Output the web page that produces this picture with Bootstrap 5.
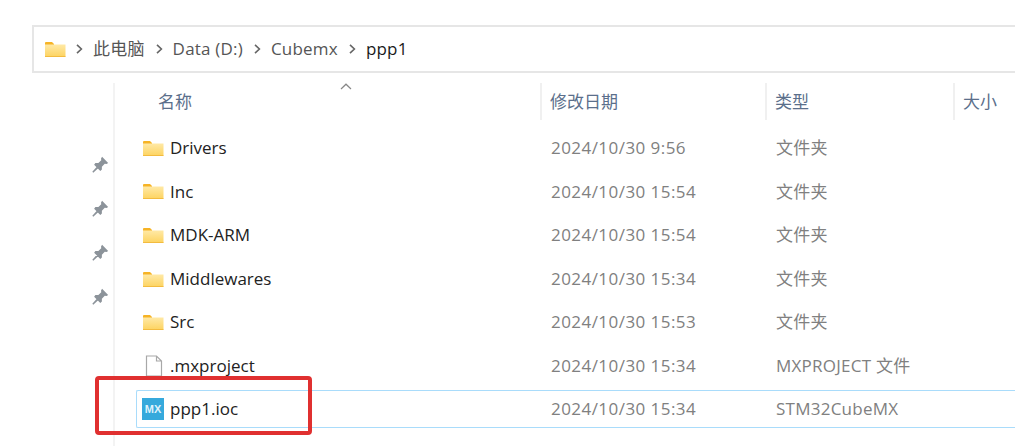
<!DOCTYPE html>
<html lang="zh"><head><meta charset="utf-8">
<link href="https://cdn.jsdelivr.net/npm/bootstrap@5.3.0/dist/css/bootstrap.min.css" rel="stylesheet">
<style>
html,body{height:446px;overflow:hidden;background:#fff}
body{font-family:"Open Sans","Noto Sans CJK SC",sans-serif;font-size:17px;position:relative}
.addr{margin:25px 0 0 32px;height:48px;border:2px solid #e6e6e6;border-right:0;padding-left:11px;color:#555;letter-spacing:.2px}
.addr .sep{width:7px;height:10px;flex:none;margin:0 10px 0 11px}
.addr .first{margin-left:10px}
.addr .cur{color:#1a1a1a}
.main{height:373px}
.gutter{width:81px;margin-left:32px;padding-top:83px;flex:none;align-items:flex-end;gap:28px;padding-right:4px}
.gutter svg{width:17px;height:17px;display:block;margin-bottom:-1px}
.vline{width:2px;background:#f3f3f3;margin-top:10px;flex:none;height:363px}
.list{flex:1;min-width:0;padding-top:10px}
.hdr{height:43px;color:#5b6f8b;position:relative}
.hdr>div{height:37px;display:flex;align-items:center;padding-left:8px}
.hdr .cell{border-left:2px solid #f0f0f0}
.caret{position:absolute;left:225px;top:0;width:12px;height:7px}
.c0{width:425px;flex:none}
.c1{width:225px;flex:none}
.c2{width:188px;flex:none}
.c0h{padding-left:43px!important}
.frow{height:43.6px;align-items:center;color:#808080}
.frow .nm{color:#222;display:flex;align-items:center;padding-left:28px;gap:6px}
.frow .nm svg{flex:none}
.frow .d{padding-left:11px}
.frow .c1{letter-spacing:.45px}
.frow .c2{letter-spacing:.25px}
.sel{margin-left:21px;height:38px;margin-top:2px;border:1px solid #a9dcfb;border-right:0;border-radius:2px 0 0 2px}
.sel .nm{padding-left:5px;width:403px;gap:6px}
.redbox{position:absolute;left:95px;top:376px;width:217px;height:59px;border:4px solid #e03030;border-radius:4px}
.mx{width:22px;height:22px;background:#36a9dc;color:#dff2fb;font:700 11px/22px "Liberation Sans",sans-serif;text-align:center;flex:none}
</style></head><body>
<svg width="0" height="0" class="position-absolute"><defs>
<linearGradient id="fg" x1="0" y1="0" x2="0" y2="1"><stop offset="0" stop-color="#ffe9a6"/><stop offset="1" stop-color="#fdd35f"/></linearGradient>
<symbol id="folder" viewBox="0 0 21 16"><path d="M0 2a1 1 0 0 1 1-1h6l2 2v2H0z" fill="#f6b325"/><path d="M0 3.500h20.500V15a1 1 0 0 1-1 1H1a1 1 0 0 1-1-1z" fill="url(#fg)"/><path d="M0 15h20.500v1H0z" fill="#f3bb3f"/></symbol>
<symbol id="pin" viewBox="0 0 16 16"><path d="M9.500 0.800 15.200 6.500 13.700 7.500 12 7.300 9.300 10 9.300 12.800 7.800 14 2 8.200 3.200 6.700 6 6.700 8.700 4 8.500 2.300z M4.500 10.200 5.800 11.500 1.200 15.700 0.300 14.800z" fill="#8c939a"/></symbol>
<symbol id="chev" viewBox="0 0 7 10"><path d="M1 .8 5.400 5 1 9.200" fill="none" stroke="#666" stroke-width="1.600"/></symbol>
</defs></svg>

<div class="addr d-flex align-items-center">
  <svg width="21" height="16"><use href="#folder"/></svg>
  <svg class="sep first"><use href="#chev"/></svg><span>此电脑</span>
  <svg class="sep"><use href="#chev"/></svg><span>Data (D:)</span>
  <svg class="sep"><use href="#chev"/></svg><span>Cubemx</span>
  <svg class="sep"><use href="#chev"/></svg><span class="cur">ppp1</span>
</div>

<div class="main d-flex">
  <div class="gutter d-flex flex-column">
    <svg><use href="#pin"/></svg><svg><use href="#pin"/></svg><svg><use href="#pin"/></svg><svg><use href="#pin"/></svg>
  </div>
  <div class="vline"></div>
  <div class="list">
    <div class="hdr d-flex">
      <svg class="caret" viewBox="0 0 12 7"><path d="M1 6 6 1.200 11 6" fill="none" stroke="#888" stroke-width="1.200"/></svg>
      <div class="c0 c0h">名称</div>
      <div class="c1 cell">修改日期</div>
      <div class="c2 cell">类型</div>
      <div class="cell flex-grow-1">大小</div>
    </div>
    <div class="frow d-flex"><div class="c0 nm"><svg width="21" height="16"><use href="#folder"/></svg>Drivers</div><div class="c1 d">2024/10/30 9:56</div><div class="c2 d">文件夹</div></div>
    <div class="frow d-flex"><div class="c0 nm"><svg width="21" height="16"><use href="#folder"/></svg>Inc</div><div class="c1 d">2024/10/30 15:54</div><div class="c2 d">文件夹</div></div>
    <div class="frow d-flex"><div class="c0 nm"><svg width="21" height="16"><use href="#folder"/></svg>MDK-ARM</div><div class="c1 d">2024/10/30 15:54</div><div class="c2 d">文件夹</div></div>
    <div class="frow d-flex"><div class="c0 nm"><svg width="21" height="16"><use href="#folder"/></svg>Middlewares</div><div class="c1 d">2024/10/30 15:34</div><div class="c2 d">文件夹</div></div>
    <div class="frow d-flex"><div class="c0 nm"><svg width="21" height="16"><use href="#folder"/></svg>Src</div><div class="c1 d">2024/10/30 15:53</div><div class="c2 d">文件夹</div></div>
    <div class="frow d-flex"><div class="c0 nm"><svg width="21" height="22" viewBox="0 0 21 22"><path d="M3.500 1h10l5 5v15h-15z M13.500 1v5h5" fill="#fff" stroke="#a8a8a8" stroke-width="1.200"/></svg>.mxproject</div><div class="c1 d">2024/10/30 15:34</div><div class="c2 d text-nowrap">MXPROJECT 文件</div></div>
    <div class="sel d-flex align-items-center frow"><div class="nm"><span class="mx">MX</span>ppp1.ioc</div><div class="c1 d">2024/10/30 15:34</div><div class="c2 d">STM32CubeMX</div></div>
  </div>
</div>
<div class="redbox"></div>
</body></html>
